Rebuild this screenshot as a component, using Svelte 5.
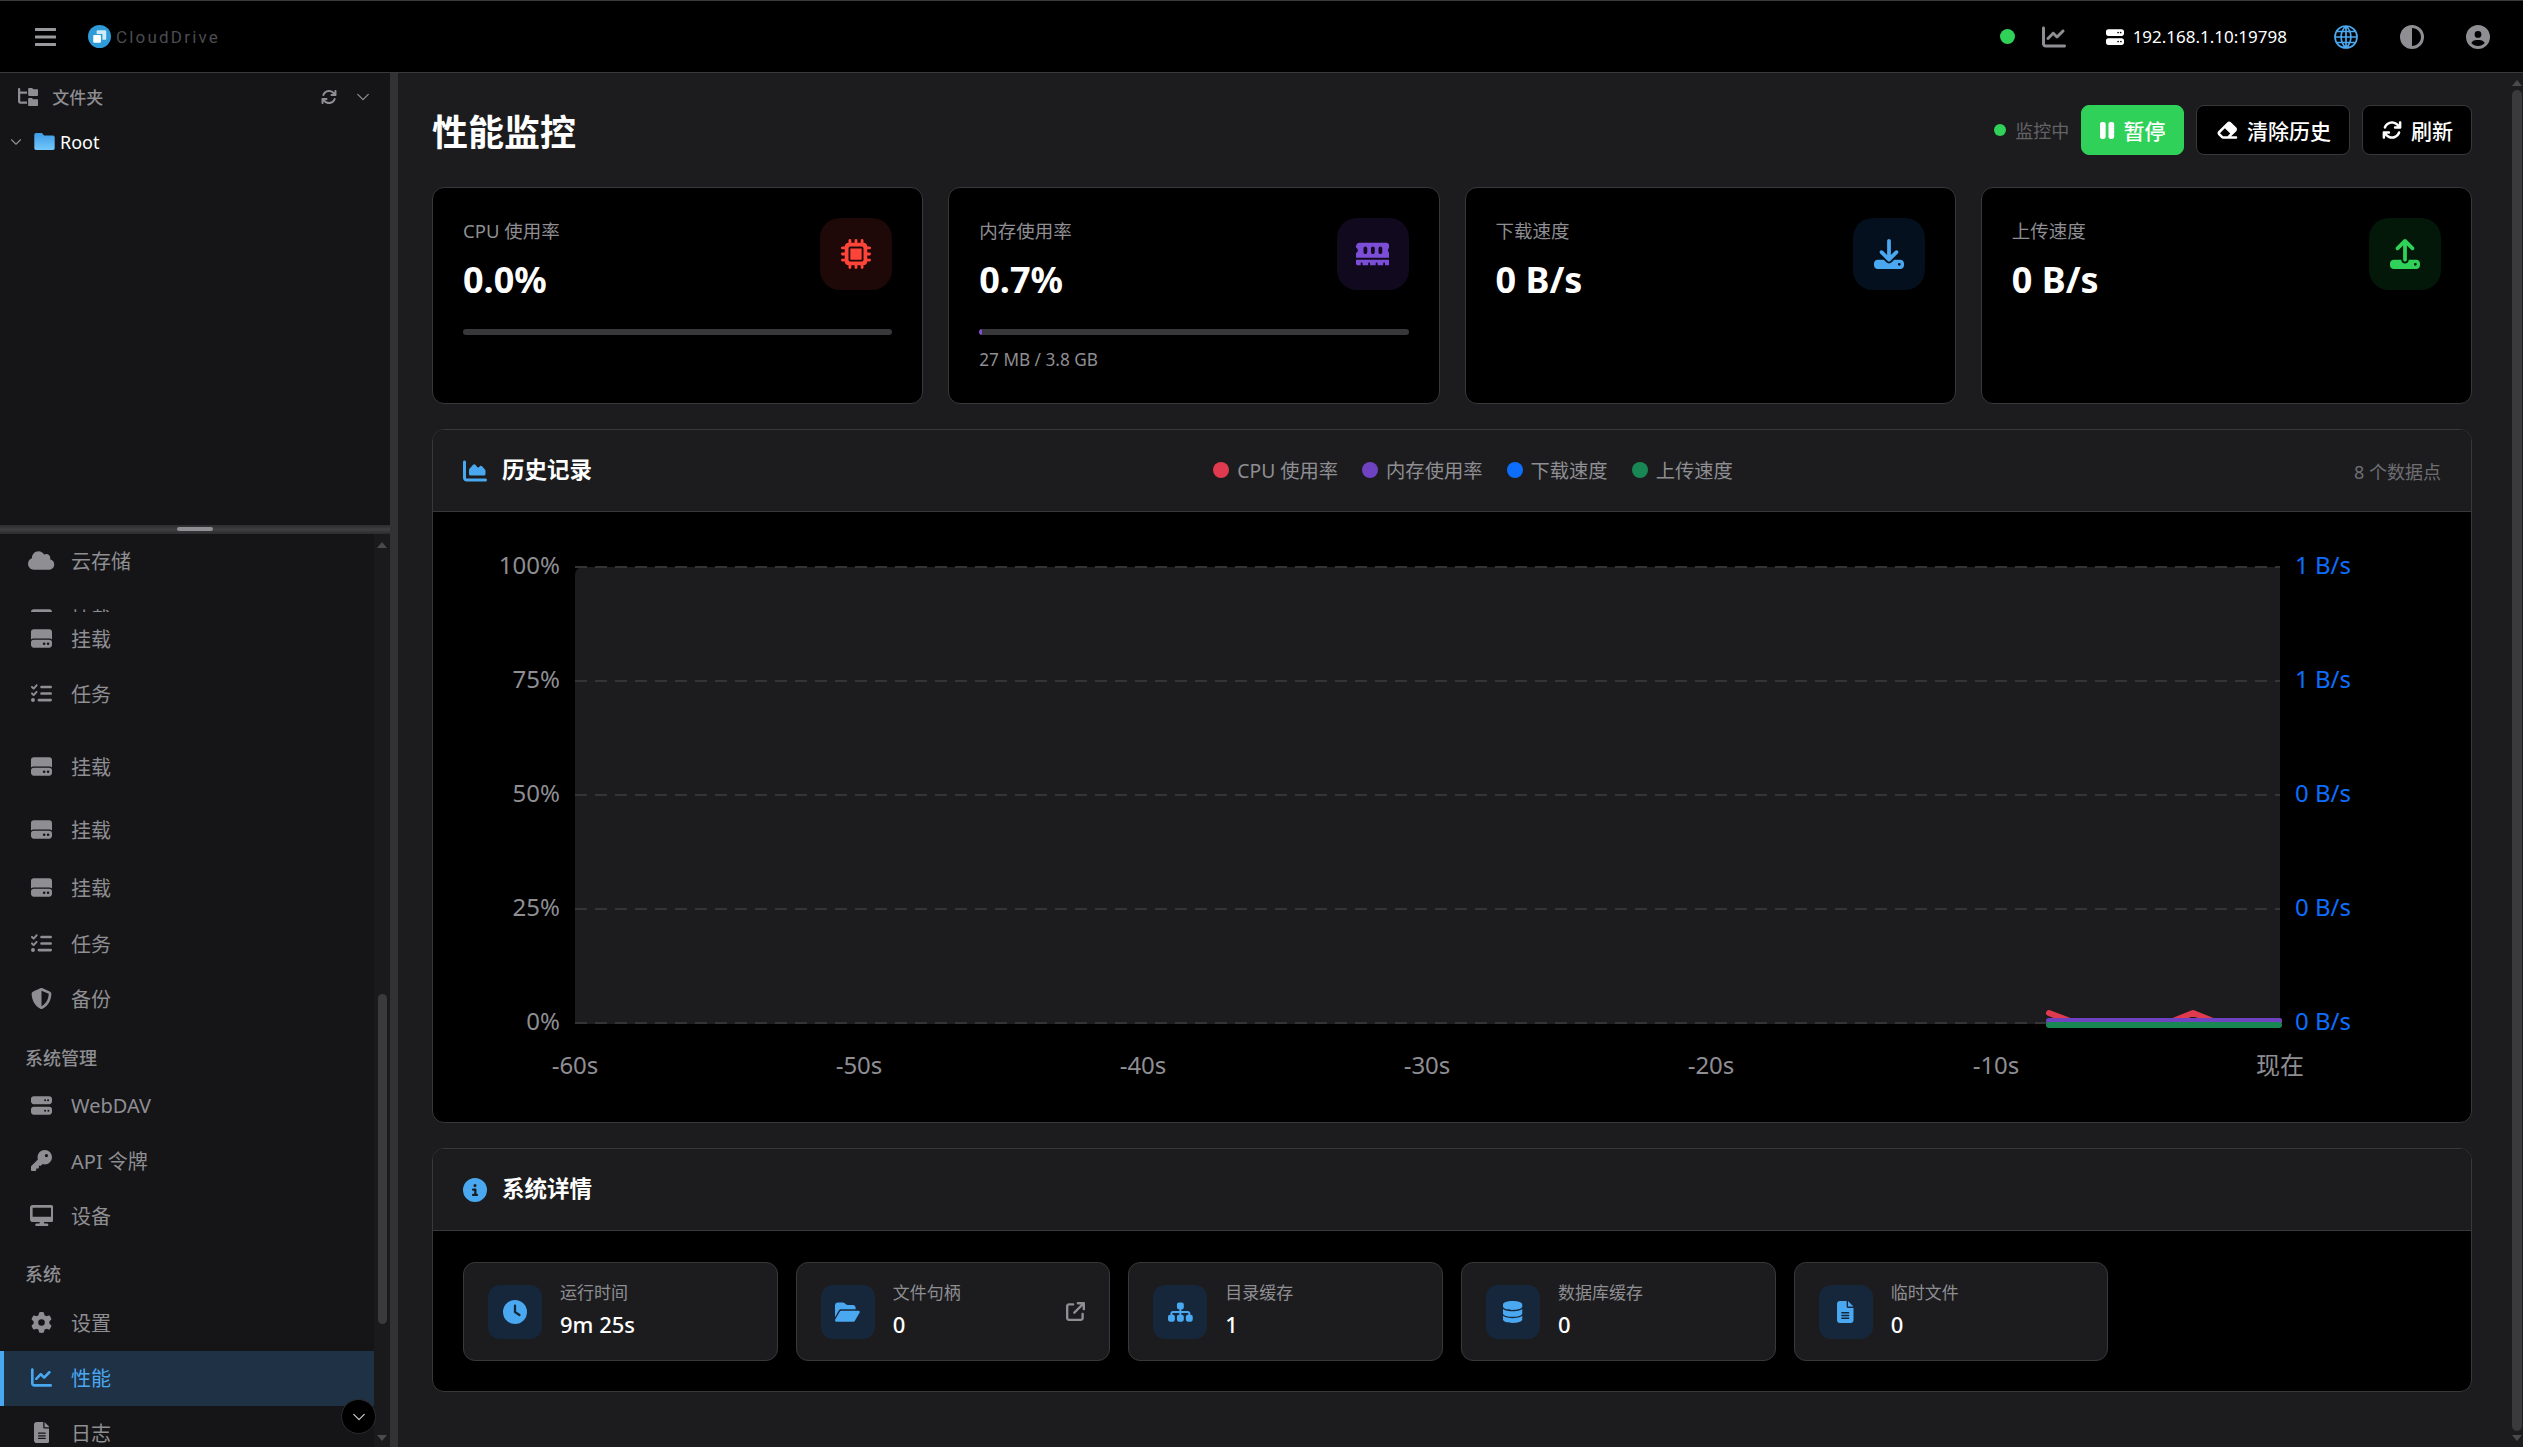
<script>
  const icons = {
    cloud: { vb: "0 0 640 512", d: "M0 336c0 79.500 64.500 144 144 144H512c70.700 0 128-57.300 128-128c0-61.900-44-113.600-102.400-125.400c4.100-10.700 6.400-22.400 6.400-34.600c0-53-43-96-96-96c-19.700 0-38.100 6-53.300 16.200C367 64.200 315.300 32 256 32C167.600 32 96 103.600 96 192c0 2.700 .1 5.400 .2 8.100C40.200 219.800 0 273.200 0 336z" },
    hdd: { vb: "0 0 512 512", d: "M0 96C0 60.700 28.700 32 64 32H448c35.300 0 64 28.700 64 64V280.400c-17-15.200-39.400-24.400-64-24.400H64c-24.600 0-47 9.200-64 24.400V96zM64 288H448c35.300 0 64 28.700 64 64v64c0 35.300-28.700 64-64 64H64c-35.300 0-64-28.700-64-64V352c0-35.300 28.700-64 64-64zM320 416a32 32 0 1 0 0-64 32 32 0 1 0 0 64zm128-32a32 32 0 1 0 -64 0 32 32 0 1 0 64 0z" },
    server: { vb: "0 0 512 512", d: "M64 32C28.700 32 0 60.700 0 96v64c0 35.300 28.700 64 64 64H448c35.300 0 64-28.700 64-64V96c0-35.300-28.700-64-64-64H64zm280 72a24 24 0 1 1 0 48 24 24 0 1 1 0-48zm48 24a24 24 0 1 1 48 0 24 24 0 1 1 -48 0zM64 288c-35.300 0-64 28.700-64 64v64c0 35.300 28.700 64 64 64H448c35.300 0 64-28.700 64-64V352c0-35.300-28.700-64-64-64H64zm280 72a24 24 0 1 1 0 48 24 24 0 1 1 0-48zm56 24a24 24 0 1 1 48 0 24 24 0 1 1 -48 0z" },
    tasks: { vb: "0 0 512 512", d: "M152.100 38.200c9.900 8.900 10.700 24 1.800 33.900l-72 80c-4.400 4.900-10.600 7.800-17.200 7.900s-12.900-2.400-17.600-7L7 113C-2.300 103.600-2.300 88.400 7 79s24.600-9.400 33.900 0l22.100 22.100 55.100-61.200c8.900-9.900 24-10.700 33.900-1.800zm0 160c9.900 8.900 10.700 24 1.800 33.900l-72 80c-4.400 4.900-10.600 7.800-17.200 7.900s-12.900-2.400-17.600-7L7 273c-9.400-9.400-9.400-24.600 0-33.900s24.600-9.400 33.900 0l22.100 22.100 55.100-61.200c8.900-9.900 24-10.700 33.900-1.800zM224 96c0-17.700 14.300-32 32-32H480c17.700 0 32 14.300 32 32s-14.300 32-32 32H256c-17.700 0-32-14.300-32-32zm0 160c0-17.700 14.300-32 32-32H480c17.700 0 32 14.300 32 32s-14.300 32-32 32H256c-17.700 0-32-14.300-32-32zM160 416c0-17.700 14.300-32 32-32H480c17.700 0 32 14.300 32 32s-14.300 32-32 32H192c-17.700 0-32-14.300-32-32zM48 368a48 48 0 1 1 0 96 48 48 0 1 1 0-96z" },
    shield: { vb: "0 0 512 512", d: "M256 0c4.600 0 9.200 1 13.400 2.900L457.700 82.800c22 9.300 38.400 31 38.300 57.200c-.5 99.200-41.300 280.700-213.600 363.200c-16.700 8-36.100 8-52.800 0C57.300 420.700 16.500 239.200 16 140c-.1-26.200 16.300-47.900 38.300-57.200L242.700 2.900C246.800 1 251.400 0 256 0zm0 66.800V444.800C394 378 431.100 230.100 432 141.400L256 66.800z" },
    key: { vb: "0 0 512 512", d: "M336 352c97.200 0 176-78.800 176-176S433.200 0 336 0S160 78.800 160 176c0 18.700 2.900 36.800 8.300 53.700L7 391c-4.500 4.500-7 10.600-7 17v80c0 13.300 10.700 24 24 24h80c13.300 0 24-10.700 24-24V448h40c13.300 0 24-10.700 24-24V384h40c6.400 0 12.500-2.500 17-7l33.300-33.300c16.900 5.400 35 8.300 53.700 8.300zM376 96a40 40 0 1 1 0 80 40 40 0 1 1 0-80z" },
    desktop: { vb: "0 0 576 512", d: "M64 0C28.700 0 0 28.700 0 64V352c0 35.300 28.700 64 64 64H240l-10.700 32H160c-17.700 0-32 14.300-32 32s14.300 32 32 32H416c17.700 0 32-14.300 32-32s-14.300-32-32-32H346.700L336 416H512c35.300 0 64-28.700 64-64V64c0-35.300-28.700-64-64-64H64zM512 64V288H64V64H512z" },
    cog: { vb: "0 0 512 512", d: "M495.900 166.600c3.200 8.700 .5 18.400-6.400 24.600l-43.300 39.400c1.100 8.300 1.700 16.800 1.700 25.400s-.6 17.100-1.700 25.400l43.300 39.400c6.900 6.200 9.600 15.900 6.400 24.600c-4.400 11.900-9.700 23.300-15.800 34.300l-4.700 8.100c-6.600 11-14 21.400-22.100 31.200c-5.900 7.200-15.700 9.600-24.500 6.800l-55.700-17.700c-13.400 10.300-28.200 18.900-44 25.400l-12.500 57.100c-2 9.100-9 16.300-18.200 17.800c-13.800 2.300-28 3.500-42.500 3.500s-28.700-1.200-42.500-3.500c-9.200-1.500-16.200-8.700-18.200-17.800l-12.500-57.100c-15.800-6.500-30.600-15.100-44-25.400L83.100 425.900c-8.800 2.800-18.600 .3-24.500-6.800c-8.100-9.800-15.500-20.200-22.100-31.200l-4.700-8.100c-6.100-11-11.400-22.400-15.800-34.300c-3.200-8.700-.5-18.400 6.400-24.600l43.300-39.400C64.600 273.100 64 264.600 64 256s.6-17.100 1.700-25.400L22.400 191.200c-6.900-6.200-9.600-15.900-6.400-24.600c4.400-11.900 9.700-23.300 15.800-34.300l4.700-8.100c6.600-11 14-21.400 22.100-31.200c5.900-7.200 15.700-9.600 24.500-6.800l55.700 17.700c13.400-10.300 28.200-18.900 44-25.400l12.500-57.100c2-9.100 9-16.300 18.200-17.800C227.300 1.200 241.500 0 256 0s28.700 1.200 42.500 3.500c9.200 1.500 16.200 8.700 18.200 17.800l12.500 57.100c15.800 6.500 30.600 15.100 44 25.400l55.700-17.700c8.800-2.800 18.600-.3 24.500 6.800c8.100 9.800 15.500 20.200 22.100 31.200l4.700 8.100c6.100 11 11.400 22.400 15.800 34.300zM256 336a80 80 0 1 0 0-160 80 80 0 1 0 0 160z" },
    line: { vb: "0 0 512 512", d: "M64 64c0-17.700-14.300-32-32-32S0 46.300 0 64V400c0 44.200 35.800 80 80 80H480c17.700 0 32-14.300 32-32s-14.300-32-32-32H80c-8.800 0-16-7.200-16-16V64zm406.600 86.600c12.500-12.500 12.500-32.800 0-45.300s-32.800-12.500-45.300 0L320 210.700l-57.400-57.400c-12.500-12.500-32.800-12.500-45.300 0l-112 112c-12.500 12.500-12.500 32.800 0 45.300s32.800 12.500 45.300 0L240 221.300l57.400 57.400c12.500 12.500 32.800 12.500 45.300 0l128-128z" },
    file: { vb: "0 0 384 512", d: "M64 0C28.700 0 0 28.700 0 64V448c0 35.300 28.700 64 64 64H320c35.300 0 64-28.700 64-64V160H256c-17.700 0-32-14.300-32-32V0H64zM256 0V128H384L256 0zM112 256H272c8.800 0 16 7.200 16 16s-7.200 16-16 16H112c-8.800 0-16-7.200-16-16s7.200-16 16-16zm0 64H272c8.800 0 16 7.200 16 16s-7.200 16-16 16H112c-8.800 0-16-7.200-16-16s7.200-16 16-16zm0 64H272c8.800 0 16 7.200 16 16s-7.200 16-16 16H112c-8.800 0-16-7.200-16-16s7.200-16 16-16z" },
    sync: { vb: "0 0 512 512", d: "M105.100 202.600c7.700-21.800 20.200-42.300 37.800-59.800c62.500-62.500 163.800-62.500 226.300 0L386.300 160H336c-17.700 0-32 14.300-32 32s14.300 32 32 32H463.500h.4c17.700 0 32-14.300 32-32V64c0-17.700-14.300-32-32-32s-32 14.300-32 32v51.200L414.400 97.600c-87.500-87.500-229.300-87.500-316.800 0C73.200 122 55.600 150.700 44.800 181.400c-5.900 16.700 2.900 34.900 19.500 40.800s34.900-2.900 40.800-19.500zM39 289.300c-5 1.500-9.800 4.200-13.700 8.200c-4 4-6.700 8.800-8.100 14c-.3 1.200-.6 2.500-.8 3.800c-.3 1.700-.4 3.400-.4 5.100V448c0 17.700 14.300 32 32 32s32-14.300 32-32V396.900l17.600 17.500c87.500 87.400 229.300 87.400 316.700 0c24.400-24.400 42.100-53.100 52.900-83.700c5.900-16.700-2.900-34.900-19.500-40.800s-34.900 2.900-40.800 19.500c-7.700 21.800-20.200 42.300-37.800 59.800c-62.500 62.500-163.800 62.500-226.300 0l-.1-.1L125.600 352H176c17.700 0 32-14.300 32-32s-14.300-32-32-32H48.400c-1.600 0-3.200 .1-4.800 .3s-3.100 .5-4.600 1z" },
    chevron: { vb: "0 0 24 24", s: "M3 7.500l9 9 9-9" },
    tree: { vb: "0 0 576 512", d: "M64 32C64 14.300 49.700 0 32 0S0 14.300 0 32v96V384c0 35.300 28.700 64 64 64H256V384H64V160H256V96H64V32zM288 192c0 17.700 14.300 32 32 32H544c17.700 0 32-14.300 32-32V64c0-17.700-14.300-32-32-32H445.300c-8.500 0-16.600-3.400-22.600-9.400L409.400 9.400c-6-6-14.100-9.400-22.600-9.400H320c-17.700 0-32 14.300-32 32V192zm0 288c0 17.700 14.300 32 32 32H544c17.700 0 32-14.300 32-32V352c0-17.700-14.300-32-32-32H445.300c-8.500 0-16.600-3.400-22.600-9.400l-13.300-13.300c-6-6-14.100-9.400-22.600-9.400H320c-17.700 0-32 14.300-32 32V480z" },
    globe: { vb: "0 0 24 24", s: "M12 1a11 11 0 1 0 0 22 11 11 0 1 0 0-22zM12 1c-6.500 6-6.500 16 0 22M12 1c6.500 6 6.500 16 0 22M12 1v22M1 12h22M2.500 6.500h19M2.500 17.500h19" },
    contrast: { vb: "0 0 512 512", d: "M448 256c0-106-86-192-192-192V448c106 0 192-86 192-192zM0 256a256 256 0 1 1 512 0A256 256 0 1 1 0 256z" },
    user: { vb: "0 0 512 512", d: "M399 384.200C376.900 345.800 335.400 320 288 320H224c-47.400 0-88.900 25.800-111 64.200c35.200 39.200 86.200 63.800 143 63.800s107.800-24.700 143-63.800zM0 256a256 256 0 1 1 512 0A256 256 0 1 1 0 256zm256 16a72 72 0 1 0 0-144 72 72 0 1 0 0 144z" },
    pause: { vb: "0 64 320 384", d: "M48 64C21.500 64 0 85.500 0 112V400c0 26.500 21.500 48 48 48H80c26.500 0 48-21.500 48-48V112c0-26.500-21.500-48-48-48H48zm192 0c-26.500 0-48 21.500-48 48V400c0 26.500 21.500 48 48 48h32c26.500 0 48-21.500 48-48V112c0-26.500-21.500-48-48-48H240z" },
    eraser: { vb: "0 0 576 512", d: "M290.700 57.400L57.400 290.700c-25 25-25 65.500 0 90.500l80 80c12 12 28.300 18.700 45.300 18.700H288h9.400H512c17.700 0 32-14.300 32-32s-14.300-32-32-32H387.900L518.600 285.300c25-25 25-65.500 0-90.500L381.300 57.400c-25-25-65.500-25-90.500 0zM297.400 416H288l-105.400 0-80-80L227.300 211.300 364.700 348.700 297.400 416z" },
    chip: { vb: "0 0 512 512", d: "M176 24c0-13.300-10.700-24-24-24s-24 10.700-24 24V64c-35.300 0-64 28.700-64 64H24c-13.300 0-24 10.700-24 24s10.700 24 24 24H64v56H24c-13.300 0-24 10.700-24 24s10.700 24 24 24H64v56H24c-13.300 0-24 10.700-24 24s10.700 24 24 24H64c0 35.300 28.700 64 64 64v40c0 13.300 10.700 24 24 24s24-10.700 24-24V448h56v40c0 13.300 10.700 24 24 24s24-10.700 24-24V448h56v40c0 13.300 10.700 24 24 24s24-10.700 24-24V448c35.300 0 64-28.700 64-64h40c13.300 0 24-10.700 24-24s-10.700-24-24-24H448V280h40c13.300 0 24-10.700 24-24s-10.700-24-24-24H448V176h40c13.300 0 24-10.700 24-24s-10.700-24-24-24H448c0-35.300-28.700-64-64-64V24c0-13.300-10.700-24-24-24s-24 10.700-24 24V64H280V24c0-13.300-10.700-24-24-24s-24 10.700-24 24V64H176V24zM160 128H352c17.700 0 32 14.300 32 32V352c0 17.700-14.300 32-32 32H160c-17.700 0-32-14.300-32-32V160c0-17.700 14.300-32 32-32zm192 32H160V352H352V160z" },
    memory: { vb: "0 0 576 512", d: "M64 64C28.700 64 0 92.700 0 128v7.400c0 6.800 4.400 12.600 10.100 16.300C23.300 160.200 32 175.100 32 192s-8.700 31.800-21.900 40.300C4.400 236 0 241.800 0 248.600V320H576V248.600c0-6.800-4.400-12.600-10.100-16.300C552.700 223.800 544 208.900 544 192s8.700-31.800 21.900-40.300c5.700-3.700 10.100-9.500 10.100-16.300V128c0-35.300-28.700-64-64-64H64zM576 352H0v64c0 17.700 14.300 32 32 32H80V416c0-8.800 7.200-16 16-16s16 7.200 16 16v32h96V416c0-8.800 7.200-16 16-16s16 7.200 16 16v32h96V416c0-8.800 7.200-16 16-16s16 7.200 16 16v32h96V416c0-8.800 7.200-16 16-16s16 7.200 16 16v32h48c17.700 0 32-14.300 32-32V352zM192 160v64c0 17.700-14.300 32-32 32s-32-14.300-32-32V160c0-17.700 14.300-32 32-32s32 14.300 32 32zm128 0v64c0 17.700-14.300 32-32 32s-32-14.300-32-32V160c0-17.700 14.300-32 32-32s32 14.300 32 32zm128 0v64c0 17.700-14.300 32-32 32s-32-14.300-32-32V160c0-17.700 14.300-32 32-32s32 14.300 32 32z" },
    download: { vb: "0 0 512 512", d: "M288 32c0-17.700-14.300-32-32-32s-32 14.300-32 32V274.700l-73.400-73.400c-12.500-12.500-32.800-12.500-45.300 0s-12.500 32.800 0 45.300l128 128c12.500 12.500 32.800 12.500 45.300 0l128-128c12.500-12.500 12.500-32.800 0-45.300s-32.800-12.500-45.300 0L288 274.700V32zM64 352c-35.300 0-64 28.700-64 64v32c0 35.300 28.700 64 64 64H448c35.300 0 64-28.700 64-64V416c0-35.300-28.700-64-64-64H346.500l-45.300 45.300c-25 25-65.500 25-90.500 0L165.500 352H64zm368 56a24 24 0 1 1 0 48 24 24 0 1 1 0-48z" },
    upload: { vb: "0 0 512 512", d: "M288 109.300V352c0 17.700-14.300 32-32 32s-32-14.300-32-32V109.300l-73.400 73.400c-12.500 12.500-32.800 12.500-45.300 0s-12.500-32.800 0-45.300l128-128c12.500-12.500 32.800-12.500 45.300 0l128 128c12.500 12.500 12.500 32.800 0 45.300s-32.800 12.500-45.300 0L288 109.300zM64 352H192c0 35.300 28.700 64 64 64s64-28.700 64-64H448c35.300 0 64 28.700 64 64v32c0 35.300-28.700 64-64 64H64c-35.300 0-64-28.700-64-64V416c0-35.300 28.700-64 64-64zM432 456a24 24 0 1 0 0-48 24 24 0 1 0 0 48z" },
    area: { vb: "0 0 512 512", d: "M64 64c0-17.700-14.300-32-32-32S0 46.300 0 64V400c0 44.200 35.800 80 80 80H480c17.700 0 32-14.300 32-32s-14.300-32-32-32H80c-8.800 0-16-7.200-16-16V64zm96 288H448c17.700 0 32-14.300 32-32V251.800c0-7.600-2.700-15-7.700-20.800l-65.800-76.800c-12.100-14.100-33.700-15-46.900-1.800l-21 21c-10 10-26.400 9.200-35.400-1.600l-39.200-47c-12.600-15.100-35.700-15.400-48.700-.6L135.900 215c-5.100 5.800-7.900 13.300-7.900 21.100v84c0 17.700 14.300 32 32 32z" },
    info: { vb: "0 0 512 512", d: "M256 512A256 256 0 1 0 256 0a256 256 0 1 0 0 512zM216 336h24V272H216c-13.300 0-24-10.700-24-24s10.700-24 24-24h48c13.300 0 24 10.700 24 24v88h8c13.300 0 24 10.700 24 24s-10.700 24-24 24H216c-13.300 0-24-10.700-24-24s10.700-24 24-24zm40-208a32 32 0 1 1 0 64 32 32 0 1 1 0-64z" },
    clock: { vb: "0 0 512 512", d: "M256 0a256 256 0 1 1 0 512A256 256 0 1 1 256 0zM232 120V256c0 8 4 15.500 10.700 20l96 64c11 7.400 25.900 4.400 33.300-6.700s4.400-25.900-6.700-33.300L280 243.200V120c0-13.300-10.700-24-24-24s-24 10.700-24 24z" },
    folderOpen: { vb: "0 0 576 512", d: "M88.700 223.800L0 375.800V96C0 60.700 28.700 32 64 32H181.500c17 0 33.300 6.700 45.300 18.700l26.500 26.500c12 12 28.300 18.700 45.300 18.700H416c35.300 0 64 28.700 64 64v32H144c-22.800 0-43.800 12.100-55.300 31.800zm27.600 16.100C122.100 230 132.600 224 144 224H544c11.500 0 22 6.100 27.700 16.100s5.700 22.200-.1 32.100l-112 192C453.900 474 443.400 480 432 480H32c-11.500 0-22-6.100-27.700-16.100s-5.700-22.200 .1-32.100l112-192z" },
    sitemap: { vb: "0 0 576 512", d: "M208 80c0-26.500 21.500-48 48-48h64c26.500 0 48 21.500 48 48v64c0 26.500-21.500 48-48 48h-8v40H464c30.900 0 56 25.100 56 56v32h8c26.500 0 48 21.500 48 48v64c0 26.500-21.500 48-48 48H464c-26.500 0-48-21.500-48-48V368c0-26.500 21.500-48 48-48h8V288c0-4.400-3.600-8-8-8H312v40h8c26.500 0 48 21.500 48 48v64c0 26.500-21.500 48-48 48H256c-26.500 0-48-21.500-48-48V368c0-26.500 21.500-48 48-48h8V280H112c-4.400 0-8 3.600-8 8v32h8c26.500 0 48 21.500 48 48v64c0 26.500-21.500 48-48 48H48c-26.500 0-48-21.500-48-48V368c0-26.500 21.500-48 48-48h8V288c0-30.900 25.100-56 56-56H264V192h-8c-26.500 0-48-21.500-48-48V80z" },
    database: { vb: "0 0 448 512", d: "M448 80v48c0 44.200-100.300 80-224 80S0 172.200 0 128V80C0 35.800 100.300 0 224 0S448 35.800 448 80zM393.200 214.700c20.800-7.400 39.900-16.900 54.800-28.600V288c0 44.200-100.300 80-224 80S0 332.200 0 288V186.100c14.900 11.800 34 21.200 54.800 28.600C99.700 230.700 159.500 240 224 240s124.300-9.300 169.200-25.300zM0 346.100c14.900 11.800 34 21.200 54.800 28.600C99.700 390.700 159.500 400 224 400s124.300-9.300 169.200-25.300c20.800-7.400 39.900-16.900 54.800-28.600V432c0 44.200-100.300 80-224 80S0 476.200 0 432V346.100z" },
    external: { vb: "0 0 512 512", d: "M320 0c-17.700 0-32 14.300-32 32s14.300 32 32 32h82.700L201.400 265.400c-12.500 12.500-12.500 32.800 0 45.300s32.800 12.500 45.300 0L448 109.300V192c0 17.700 14.300 32 32 32s32-14.300 32-32V32c0-17.700-14.300-32-32-32H320zM80 32C35.800 32 0 67.800 0 112V432c0 44.200 35.800 80 80 80H400c44.200 0 80-35.800 80-80V320c0-17.700-14.300-32-32-32s-32 14.300-32 32V432c0 8.800-7.200 16-16 16H80c-8.800 0-16-7.200-16-16V112c0-8.800 7.200-16 16-16H192c17.700 0 32-14.300 32-32s-14.300-32-32-32H80z" },
  };

  const folderPath = "M2 0h7l2.500 3H22a2 2 0 0 1 2 2v13a2 2 0 0 1-2 2H2a2 2 0 0 1-2-2V2a2 2 0 0 1 2-2z";

  // mt is the space above a row, the nav is not evenly spaced in the app either
  const nav = [
    { icon: "cloud", text: "云存储" },
    { icon: "hdd", text: "挂载", clipped: true },
    { icon: "hdd", text: "挂载" },
    { icon: "tasks", text: "任务" },
    { icon: "hdd", text: "挂载", mt: 18 },
    { icon: "hdd", text: "挂载", mt: 8 },
    { icon: "hdd", text: "挂载", mt: 3 },
    { icon: "tasks", text: "任务", mt: 1 },
    { icon: "shield", text: "备份" },
    { label: "系统管理", pad: 18 },
    { icon: "server", text: "WebDAV" },
    { icon: "key", text: "API 令牌" },
    { icon: "desktop", text: "设备" },
    { label: "系统", pad: 17 },
    { icon: "cog", text: "设置" },
    { icon: "line", text: "性能", active: true },
    { icon: "file", text: "日志" },
  ];

  const stats = [
    { label: "CPU 使用率", value: "0.0%", icon: "chip", tone: "red", bar: 0 },
    { label: "内存使用率", value: "0.7%", icon: "memory", tone: "purple", bar: 0.7, sub: "27 MB / 3.8 GB" },
    { label: "下载速度", value: "0 B/s", icon: "download", tone: "blue" },
    { label: "上传速度", value: "0 B/s", icon: "upload", tone: "green" },
  ];

  const legend = [
    { text: "CPU 使用率", color: "#e03a4e" },
    { text: "内存使用率", color: "#6f42c1" },
    { text: "下载速度", color: "#0d6efd" },
    { text: "上传速度", color: "#198754" },
  ];

  const details = [
    { label: "运行时间", value: "9m 25s", icon: "clock", size: "h24" },
    { label: "文件句柄", value: "0", icon: "folderOpen", size: "h22", link: true },
    { label: "目录缓存", value: "1", icon: "sitemap", size: "h22" },
    { label: "数据库缓存", value: "0", icon: "database", size: "h22" },
    { label: "临时文件", value: "0", icon: "file", size: "h22" },
  ];

  const gridY = [
    { y: 567, left: "100%", right: "1 B/s" },
    { y: 681, left: "75%", right: "1 B/s" },
    { y: 795, left: "50%", right: "0 B/s" },
    { y: 909, left: "25%", right: "0 B/s" },
    { y: 1023, left: "0%", right: "0 B/s" },
  ];

  const ticks = [
    { x: 575, text: "-60s" },
    { x: 859, text: "-50s" },
    { x: 1143, text: "-40s" },
    { x: 1427, text: "-30s" },
    { x: 1711, text: "-20s" },
    { x: 1996, text: "-10s" },
    { x: 2280, text: "现在" },
  ];
</script>

{#snippet icon(name, cls)}
  <svg class={cls} viewBox={icons[name].vb} aria-hidden="true">
    {#if icons[name].s}
      <path d={icons[name].s} fill="none" stroke="currentColor" stroke-width="2.2" stroke-linecap="round" stroke-linejoin="round" />
    {:else}
      <path d={icons[name].d} fill="currentColor" fill-rule="evenodd" />
    {/if}
  </svg>
{/snippet}

{#snippet navRow(item)}
  <div class="nav-row" class:active={item.active}>
    <span class="nav-icon">{@render icon(item.icon, "h21")}</span>
    <span>{item.text}</span>
  </div>
{/snippet}

<div class="app">
  <header class="topbar">
    <div class="brand">
      <svg class="burger" viewBox="0 0 21 18" aria-hidden="true">
        <path d="M1 0h19a1 1 0 0 1 0 3H1a1 1 0 0 1 0-3zM1 7.500h19a1 1 0 0 1 0 3H1a1 1 0 0 1 0-3zM1 15h19a1 1 0 0 1 0 3H1a1 1 0 0 1 0-3z" fill="#98989d" />
      </svg>
      <svg class="logo" viewBox="0 0 24 24" aria-hidden="true">
        <circle cx="12" cy="12" r="12" fill="#2f9bd8" />
        <path d="M9 6.500a1 1 0 0 1 1-1h8a1 1 0 0 1 1 1v8a1 1 0 0 1-1 1h-3v-6H9z" fill="#cfeaf8" />
        <rect x="5.500" y="10.500" width="8" height="8" rx="1" fill="#fff" />
      </svg>
      <span class="brand-name">CloudDrive</span>
    </div>
    <div class="top-right">
      <span class="dot"></span>
      {@render icon("line", "h24 grey")}
      <span class="host">
        {@render icon("server", "h18 white")}
        192.168.1.10:19798
      </span>
      {@render icon("globe", "h24 sky thin")}
      {@render icon("contrast", "h24 grey")}
      {@render icon("user", "h24 grey")}
    </div>
  </header>

  <div class="body">
    <aside class="sidebar">
      <section class="tree">
        <div class="tree-head">
          {@render icon("tree", "h18")}
          <span class="tree-title">文件夹</span>
          {@render icon("sync", "h16")}
          {@render icon("chevron", "h14")}
        </div>
        <div class="tree-root">
          {@render icon("chevron", "h12")}
          <svg class="root-folder" viewBox="0 0 24 20" aria-hidden="true">
            <defs>
              <linearGradient id="fold" x1="0" y1="0" x2="0" y2="1">
                <stop offset="0" stop-color="#3d9be6" />
                <stop offset="1" stop-color="#74c8fb" />
              </linearGradient>
            </defs>
            <path d={folderPath} fill="url(#fold)" />
          </svg>
          <span>Root</span>
        </div>
      </section>
      <div class="resizer"><span></span></div>
      <section class="nav-wrap">
        <nav class="nav">
          {#each nav as item}
            {#if item.label}
              <div class="nav-label" style:padding-top="{item.pad}px">{item.label}</div>
            {:else if item.clipped}
              <div class="nav-clip">{@render navRow(item)}</div>
            {:else}
              <div style:margin-top="{item.mt ?? 0}px">{@render navRow(item)}</div>
            {/if}
          {/each}
        </nav>
        <div class="nav-bar">
          <span class="arrow up"></span>
          <span class="nav-thumb"></span>
          <span class="arrow down"></span>
        </div>
        <button class="scroll-down" aria-label="向下滚动">{@render icon("chevron", "h14")}</button>
      </section>
    </aside>
    <div class="grip"></div>

    <main class="main">
      <div class="page-head">
        <h1>性能监控</h1>
        <div class="actions">
          <span class="live"><span class="live-dot"></span>监控中</span>
          <button class="btn primary">{@render icon("pause", "h17")}暂停</button>
          <button class="btn">{@render icon("eraser", "h20")}清除历史</button>
          <button class="btn">{@render icon("sync", "h20")}刷新</button>
        </div>
      </div>

      <div class="stats">
        {#each stats as s}
          <div class="stat">
            <div class="stat-top">
              <div>
                <div class="stat-label">{s.label}</div>
                <div class="stat-value">{s.value}</div>
              </div>
              <div class="stat-icon {s.tone}">{@render icon(s.icon, "h30")}</div>
            </div>
            {#if s.bar !== undefined}
              <div class="bar"><div class="bar-fill {s.tone}" style:width="{s.bar}%"></div></div>
            {/if}
            {#if s.sub}
              <div class="stat-sub">{s.sub}</div>
            {/if}
          </div>
        {/each}
      </div>

      <section class="panel history">
        <div class="panel-head">
          <div class="panel-title">{@render icon("area", "h24 sky")}<span>历史记录</span></div>
          <div class="legend">
            {#each legend as l}
              <span class="legend-item"><i style:background={l.color}></i>{l.text}</span>
            {/each}
          </div>
          <span class="points">8 个数据点</span>
        </div>
        <svg class="chart" viewBox="433 512 2038 610" role="img">
          <path d="M575 1024V575a8 8 0 0 1 8-8H2280V1024z" fill="#1c1c1e" />
          {#each gridY as g}
            <line x1="575" x2="2280" y1={g.y} y2={g.y} class="grid" />
            <text x="560" y={g.y + 7} text-anchor="end" class="axis">{g.left}</text>
            <text x="2295" y={g.y + 7} class="axis-blue">{g.right}</text>
          {/each}
          {#each ticks as t}
            <text x={t.x} y="1074" text-anchor="middle" class="axis">{t.text}</text>
          {/each}
          <polyline points="2049,1013 2070,1021 2173,1021 2193,1013 2213,1021 2279,1021" class="series" stroke="#e03a4e" />
          <polyline points="2049,1021 2279,1021" class="series" stroke="#6f42c1" />
          <polyline points="2049,1025 2279,1025" class="series" stroke="#198754" />
        </svg>
      </section>

      <section class="panel sys">
        <div class="panel-head">
          <div class="panel-title">{@render icon("info", "h24 sky")}<span>系统详情</span></div>
        </div>
        <div class="sys-body">
          {#each details as d}
            <div class="sys-item">
              <div class="sys-icon">{@render icon(d.icon, d.size)}</div>
              <div class="sys-text">
                <div class="sys-label">{d.label}</div>
                <div class="sys-value">{d.value}</div>
              </div>
              {#if d.link}
                <span class="sys-link">{@render icon("external", "h19")}</span>
              {/if}
            </div>
          {/each}
        </div>
      </section>
    </main>

    <div class="main-bar">
      <span class="arrow up"></span>
      <span class="main-thumb"></span>
      <span class="arrow down"></span>
    </div>
  </div>
</div>

<style>
  :global(body) {
    margin: 0;
    background: #000;
  }

  .app {
    display: flex;
    flex-direction: column;
    height: 1447px;
    overflow: hidden;
    font-family: "Noto Sans", "Noto Sans CJK SC", sans-serif;
    color: #fff;
    background: #1c1c1e;
  }

  svg {
    display: block;
    flex-shrink: 0;
    width: auto;
  }

  .h12 { height: 12px; }
  .h14 { height: 14px; }
  .h16 { height: 16px; }
  .h17 { height: 17px; }
  .h18 { height: 18px; }
  .h19 { height: 19px; }
  .h20 { height: 20px; }
  .h21 { height: 21px; }
  .h22 { height: 22px; }
  .h24 { height: 24px; }
  .h30 { height: 30px; }
  .grey { color: #8e8e93; }
  .white { color: #fff; }
  .sky { color: #4aa8f0; }
  .thin path { stroke-width: 1.7; }

  /* top bar */
  .topbar {
    display: flex;
    align-items: center;
    justify-content: space-between;
    height: 73px;
    box-sizing: border-box;
    padding: 0 33px 0 35px;
    background: #000;
    border-top: 1px solid #3a3a3c;
    border-bottom: 1px solid #3a3a3c;
    flex-shrink: 0;
  }

  .brand {
    display: flex;
    align-items: center;
  }

  .burger {
    width: 21px;
    height: 18px;
  }

  .logo {
    width: 23px;
    height: 23px;
    margin-left: 32px;
  }

  .brand-name {
    margin-left: 5px;
    font-family: "Roboto", sans-serif;
    font-size: 17px;
    letter-spacing: 2.2px;
    color: #4c4c50;
  }

  .top-right {
    display: flex;
    align-items: center;
  }

  .dot {
    width: 15px;
    height: 15px;
    border-radius: 50%;
    background: #30d158;
    margin-right: 27px;
  }

  .host {
    display: flex;
    align-items: center;
    gap: 9px;
    margin: 0 47px 0 40px;
    font-size: 17px;
    color: #fff;
  }

  .top-right > svg:nth-last-child(2),
  .top-right > svg:last-child {
    margin-left: 42px;
  }

  /* sidebar */
  .body {
    display: flex;
    flex: 1;
    min-height: 0;
  }

  .sidebar {
    display: flex;
    flex-direction: column;
    width: 390px;
    background: #151517;
    flex-shrink: 0;
  }

  .grip {
    width: 8px;
    background: #323234;
    flex-shrink: 0;
  }

  .tree {
    height: 452px;
    color: #8e8e93;
  }

  .tree-head {
    display: flex;
    align-items: center;
    height: 47px;
    padding: 0 20px 0 18px;
  }

  .tree-title {
    flex: 1;
    margin-left: 14px;
    font-size: 17px;
    font-weight: 500;
  }

  .tree-head svg:last-child {
    margin-left: 19px;
  }

  .tree-root {
    display: flex;
    align-items: center;
    height: 43px;
    padding-left: 10px;
    font-size: 18px;
    color: #fff;
  }

  .tree-root > svg:first-child {
    color: #8e8e93;
  }

  .root-folder {
    width: 21px;
    height: 17px;
    margin: 0 5px 0 12px;
  }

  .resizer {
    display: flex;
    justify-content: center;
    height: 9px;
    background: linear-gradient(#2c2c2e, #3f3f41 50%, #2c2c2e);
    flex-shrink: 0;
  }

  .resizer span {
    width: 36px;
    height: 4px;
    margin-top: 2px;
    border-radius: 2px;
    background: #8e8e93;
  }

  .nav-wrap {
    position: relative;
    display: flex;
    flex: 1;
    min-height: 0;
  }

  .nav {
    flex: 1;
    min-width: 0;
    overflow: hidden;
  }

  .nav-row {
    display: flex;
    align-items: center;
    gap: 19px;
    height: 55px;
    padding: 0 0 3px 31px;
    font-size: 20px;
    color: #8e8e93;
    box-sizing: border-box;
  }

  .nav-row.active {
    color: #4aa8f0;
    background: #1f3245;
    box-shadow: inset 4px 0 0 #4aa8f0;
  }

  .nav-icon {
    display: flex;
    justify-content: center;
    width: 21px;
  }

  .nav-clip {
    height: 23px;
    padding-top: 3px;
    box-sizing: border-box;
    overflow: hidden;
  }

  .nav-label {
    height: 52px;
    box-sizing: border-box;
    padding-left: 25px;
    font-size: 18px;
    font-weight: 500;
    line-height: 26px;
    color: #8e8e93;
  }

  .nav-bar {
    display: flex;
    flex-direction: column;
    align-items: center;
    width: 16px;
    background: #1a1a1c;
    padding: 8px 0 6px;
    box-sizing: border-box;
  }

  .nav-thumb {
    width: 9px;
    height: 330px;
    margin: auto 0 111px;
    border-radius: 5px;
    background: #3a3a3c;
  }

  .arrow {
    width: 0;
    height: 0;
    border-left: 5px solid transparent;
    border-right: 5px solid transparent;
    flex-shrink: 0;
  }

  .arrow.up { border-bottom: 6px solid #4a4a4c; }
  .arrow.down { border-top: 6px solid #4a4a4c; }

  .scroll-down {
    position: absolute;
    right: 14px;
    bottom: 13px;
    display: flex;
    align-items: center;
    justify-content: center;
    width: 35px;
    height: 35px;
    padding: 0;
    border: 1px solid #2c2c2e;
    border-radius: 50%;
    background: #000;
    color: #c7c7cc;
  }

  /* main */
  .main {
    flex: 1;
    min-width: 0;
    padding: 32px 39px 0 34px;
    box-sizing: border-box;
  }

  .page-head {
    display: flex;
    align-items: center;
    justify-content: space-between;
    height: 50px;
    margin-bottom: 32px;
  }

  h1 {
    margin: 0;
    font-size: 36px;
    font-weight: 700;
  }

  .actions {
    display: flex;
    align-items: center;
    gap: 12px;
  }

  .live {
    display: flex;
    align-items: center;
    gap: 9px;
    font-size: 18px;
    color: #636366;
  }

  .live-dot {
    width: 12px;
    height: 12px;
    border-radius: 50%;
    background: #30d158;
  }

  .btn {
    display: flex;
    align-items: center;
    gap: 9px;
    height: 50px;
    padding: 0 18px 0 19px;
    border: 1px solid #38383a;
    border-radius: 8px;
    background: #000;
    color: #fff;
    font: 500 21px "Noto Sans", "Noto Sans CJK SC", sans-serif;
  }

  .btn.primary {
    padding: 0 17px 0 18px;
    background: #30d158;
    border-color: #30d158;
  }

  .stats {
    display: grid;
    grid-template-columns: repeat(4, 1fr);
    gap: 25px;
    margin-bottom: 25px;
  }

  .stat {
    height: 217px;
    padding: 30px;
    box-sizing: border-box;
    border: 1px solid #38383a;
    border-radius: 12px;
    background: #000;
  }

  .stat-top {
    display: flex;
    justify-content: space-between;
    height: 86px;
  }

  .stat-label {
    font-size: 18.5px;
    line-height: 26px;
    color: #8e8e93;
  }

  .stat-value {
    margin-top: 12px;
    font-size: 36px;
    font-weight: 700;
    line-height: 48px;
  }

  .stat-icon {
    display: flex;
    align-items: center;
    justify-content: center;
    width: 72px;
    height: 72px;
    border-radius: 20px;
  }

  .stat-icon.red { background: #1e0808; color: #ff453a; }
  .stat-icon.purple { background: #110a1f; color: #7c4dd6; }
  .stat-icon.blue { background: #04101d; color: #4aa8f0; }
  .stat-icon.green { background: #04180a; color: #30d158; }

  .bar {
    height: 6px;
    margin-top: 25px;
    border-radius: 3px;
    background: #38383a;
    overflow: hidden;
  }

  .bar-fill {
    height: 100%;
    border-radius: 3px;
  }

  .bar-fill.red { background: #ff453a; }
  .bar-fill.purple { background: #7c4dd6; }

  .stat-sub {
    margin-top: 14px;
    font-size: 17.2px;
    line-height: 22px;
    color: #8e8e93;
  }

  .panel {
    border: 1px solid #38383a;
    border-radius: 12px;
    overflow: hidden;
    background: #000;
  }

  .history {
    margin-bottom: 25px;
  }

  .panel-head {
    display: flex;
    align-items: center;
    justify-content: space-between;
    height: 82px;
    padding: 0 30px;
    box-sizing: border-box;
    background: #1c1c1e;
    border-bottom: 1px solid #38383a;
  }

  .panel-title {
    display: flex;
    align-items: center;
    gap: 15px;
    font-size: 22.5px;
    font-weight: 700;
  }

  .panel-title span {
    margin-top: -5px;
  }

  .legend {
    display: flex;
    gap: 24px;
    margin-top: -2px;
    font-size: 19.3px;
    color: #8e8e93;
  }

  .legend-item {
    display: flex;
    align-items: center;
    gap: 8px;
  }

  .legend-item i {
    width: 16px;
    height: 16px;
    border-radius: 50%;
  }

  .points {
    font-size: 18px;
    color: #6e6e73;
  }

  .chart {
    width: 100%;
    height: 610px;
  }

  .grid {
    stroke: #343436;
    stroke-width: 2;
    stroke-dasharray: 12 8;
  }

  .axis {
    font-size: 24px;
    fill: #8e8e93;
  }

  .axis-blue {
    font-size: 24px;
    fill: #0d6efd;
  }

  .series {
    fill: none;
    stroke-width: 6;
    stroke-linecap: round;
    stroke-linejoin: round;
  }

  .sys-body {
    display: grid;
    grid-template-columns: repeat(6, 1fr);
    gap: 18px;
    padding: 31px 30px 30px;
  }

  .sys-item {
    display: flex;
    align-items: center;
    gap: 18px;
    height: 99px;
    padding: 0 24px;
    box-sizing: border-box;
    border: 1px solid #38383a;
    border-radius: 12px;
    background: #1c1c1e;
  }

  .sys-icon {
    display: flex;
    align-items: center;
    justify-content: center;
    width: 54px;
    height: 54px;
    border-radius: 12px;
    background: #17273b;
    color: #4aa8f0;
  }

  .sys-text {
    flex: 1;
    margin-top: -4px;
  }

  .sys-label {
    font-size: 17px;
    line-height: 22px;
    color: #8e8e93;
  }

  .sys-value {
    margin-top: 7px;
    font-size: 22px;
    font-weight: 500;
    line-height: 26px;
  }

  .sys-link {
    color: #8e8e93;
  }

  .main-bar {
    display: flex;
    flex-direction: column;
    align-items: center;
    width: 12px;
    padding: 7px 0 6px;
    box-sizing: border-box;
    flex-shrink: 0;
  }

  .main-thumb {
    width: 10px;
    flex: 1;
    margin: 4px 0;
    border-radius: 5px;
    background: #3a3a3c;
  }
</style>
